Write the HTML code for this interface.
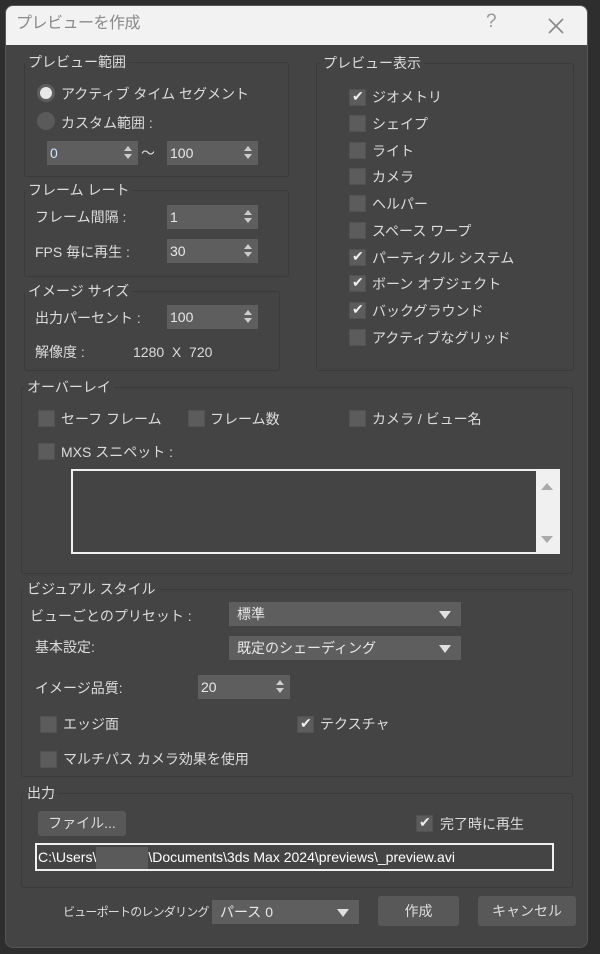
<!DOCTYPE html>
<html><head><meta charset="utf-8"><style>
*{box-sizing:border-box;margin:0;padding:0}
body{width:600px;height:954px;background:#2e2e2e;position:relative;overflow:hidden;font-family:"Liberation Sans","Noto Sans CJK JP",sans-serif;font-size:14px;color:#dcdcdc}
.dlg{position:absolute;left:5px;top:5px;width:583px;height:943px;background:#444;border-radius:8px;overflow:hidden;border:1px solid #555}
.title{position:absolute;left:0;top:0;width:100%;height:39px;background:#f2f2f2;color:#8a8a8a;font-size:16px}
.a{position:absolute;white-space:nowrap;line-height:18px}
.g{position:absolute;border:1px solid #3a3a3a;border-radius:3px}
.gl{position:absolute;background:#444;padding:0 3px;line-height:16px;white-space:nowrap;color:#ddd}
.cb{position:absolute;width:17px;height:17px;background:#5c5c5c;border:1px solid #525252}
.cb.c::after{content:"✔";position:absolute;left:2px;top:-2px;font-size:14px;color:#eee}
.sp{position:absolute;height:24px;background:#5e5e5e;color:#e8e8e8;padding-left:3px;line-height:24px}
.sp::after{content:"";position:absolute;right:6px;top:5px;border:4px solid transparent;border-bottom:5px solid #ccc;border-top:0}
.sp::before{content:"";position:absolute;right:6px;top:13px;border:4px solid transparent;border-top:5px solid #ccc;border-bottom:0}
.dd{position:absolute;height:24px;background:#5e5e5e;color:#e8e8e8;padding-left:8px;line-height:24px}
.dd::after{content:"";position:absolute;right:10px;top:9px;border:6px solid transparent;border-top:8px solid #e0e0e0;border-bottom:0}
.btn{position:absolute;background:#585858;border-radius:3px;text-align:center;color:#ddd}
.rd{position:absolute;width:18px;height:18px;border-radius:50%;background:#5a5a5a}
</style></head><body>
<div class="dlg">
<div class="title"><span class="a" style="left:10px;top:9px;letter-spacing:-0.5px">プレビューを作成</span><span class="a" style="left:480px;top:7px;font-size:19px;color:#999">?</span>
<svg style="position:absolute;left:542px;top:12px" width="16" height="16"><path d="M1 1L15 15M15 1L1 15" stroke="#888" stroke-width="1.6"/></svg></div>
</div>
<div class="g" style="left:24px;top:62px;width:265px;height:115px"></div><span class="gl" style="left:25px;top:54px">プレビュー範囲</span>
<div class="rd" style="left:37px;top:84px;border:3px solid #5e5e5e;background:#e8e8e8"></div><span class="a" style="left:61px;top:85px">アクティブ タイム セグメント</span>
<div class="rd" style="left:37px;top:112px"></div><span class="a" style="left:61px;top:114px">カスタム範囲 :</span>
<div class="sp" style="left:47px;top:141px;width:91px;color:#d0e4ff">0</div><span class="a" style="left:141px;top:144px">～</span>
<div class="sp" style="left:167px;top:141px;width:91px">100</div>

<div class="g" style="left:24px;top:190px;width:265px;height:87px"></div><span class="gl" style="left:25px;top:182px">フレーム レート</span>
<span class="a" style="left:35px;top:208px">フレーム間隔 :</span><div class="sp" style="left:167px;top:205px;width:91px">1</div>
<span class="a" style="left:35px;top:243px">FPS 毎に再生 :</span><div class="sp" style="left:167px;top:239px;width:91px">30</div>

<div class="g" style="left:24px;top:291px;width:256px;height:80px"></div><span class="gl" style="left:25px;top:283px">イメージ サイズ</span>
<span class="a" style="left:35px;top:309px">出力パーセント :</span><div class="sp" style="left:167px;top:305px;width:91px">100</div>
<span class="a" style="left:35px;top:343px">解像度 :</span><span class="a" style="left:133px;top:343px">1280 &nbsp;X &nbsp;720</span>

<div class="g" style="left:316px;top:63px;width:258px;height:308px"></div><span class="gl" style="left:320px;top:55px">プレビュー表示</span>
<div class="cb c" style="left:349px;top:89px"></div><span class="a" style="left:372px;top:88px">ジオメトリ</span>
<div class="cb" style="left:349px;top:115px"></div><span class="a" style="left:372px;top:115px">シェイプ</span>
<div class="cb" style="left:349px;top:142px"></div><span class="a" style="left:372px;top:142px">ライト</span>
<div class="cb" style="left:349px;top:168px"></div><span class="a" style="left:372px;top:168px">カメラ</span>
<div class="cb" style="left:349px;top:195px"></div><span class="a" style="left:372px;top:195px">ヘルパー</span>
<div class="cb" style="left:349px;top:222px"></div><span class="a" style="left:372px;top:222px">スペース ワープ</span>
<div class="cb c" style="left:349px;top:249px"></div><span class="a" style="left:372px;top:249px">パーティクル システム</span>
<div class="cb c" style="left:349px;top:275px"></div><span class="a" style="left:372px;top:275px">ボーン オブジェクト</span>
<div class="cb c" style="left:349px;top:302px"></div><span class="a" style="left:372px;top:302px">バックグラウンド</span>
<div class="cb" style="left:349px;top:329px"></div><span class="a" style="left:372px;top:329px">アクティブなグリッド</span>

<div class="g" style="left:21px;top:387px;width:552px;height:187px"></div><span class="gl" style="left:24px;top:379px">オーバーレイ</span>
<div class="cb" style="left:38px;top:410px"></div><span class="a" style="left:61px;top:410px">セーフ フレーム</span>
<div class="cb" style="left:188px;top:410px"></div><span class="a" style="left:210px;top:410px">フレーム数</span>
<div class="cb" style="left:349px;top:410px"></div><span class="a" style="left:372px;top:410px">カメラ / ビュー名</span>
<div class="cb" style="left:38px;top:443px"></div><span class="a" style="left:61px;top:443px">MXS スニペット :</span>
<div style="position:absolute;left:71px;top:469px;width:489px;height:85px;border:2px solid #f0f0f0;background:#444"><div style="position:absolute;right:0;top:0;width:22px;height:100%;background:#f0f0f0"><div style="position:absolute;left:5px;top:12px;border:6px solid transparent;border-bottom:7px solid #aaa;border-top:0"></div><div style="position:absolute;left:5px;top:65px;border:6px solid transparent;border-top:7px solid #aaa;border-bottom:0"></div></div></div>

<div class="g" style="left:21px;top:589px;width:552px;height:188px"></div><span class="gl" style="left:24px;top:581px">ビジュアル スタイル</span>
<span class="a" style="left:30px;top:607px">ビューごとのプリセット :</span><div class="dd" style="left:229px;top:602px;width:232px">標準</div>
<span class="a" style="left:35px;top:638px">基本設定:</span><div class="dd" style="left:229px;top:636px;width:232px">既定のシェーディング</div>
<span class="a" style="left:35px;top:679px">イメージ品質:</span><div class="sp" style="left:198px;top:675px;width:92px">20</div>
<div class="cb" style="left:40px;top:716px"></div><span class="a" style="left:63px;top:715px">エッジ面</span>
<div class="cb c" style="left:297px;top:716px"></div><span class="a" style="left:320px;top:715px">テクスチャ</span>
<div class="cb" style="left:40px;top:751px"></div><span class="a" style="left:63px;top:750px">マルチパス カメラ効果を使用</span>

<div class="g" style="left:21px;top:793px;width:552px;height:95px"></div><span class="gl" style="left:24px;top:785px">出力</span>
<div class="btn" style="left:38px;top:811px;width:88px;height:25px;line-height:25px">ファイル...</div>
<div class="cb c" style="left:416px;top:815px"></div><span class="a" style="left:440px;top:815px">完了時に再生</span>
<div style="position:absolute;left:35px;top:843px;width:519px;height:28px;border:2px solid #f0f0f0;background:#444;line-height:24px;padding-left:1px;color:#fff;white-space:nowrap">C:\Users\<span style="display:inline-block;width:52px;height:22px;background:#5a5a5a;vertical-align:middle"></span>\Documents\3ds Max 2024\previews\_preview.avi</div>

<span class="a" style="left:63px;top:903px;font-size:12px;letter-spacing:-0.8px">ビューポートのレンダリング :</span>
<div class="dd" style="left:212px;top:900px;width:147px">パース 0</div>
<div class="btn" style="left:378px;top:896px;width:81px;height:30px;line-height:30px">作成</div>
<div class="btn" style="left:478px;top:896px;width:98px;height:30px;line-height:30px">キャンセル</div>
</body></html>
